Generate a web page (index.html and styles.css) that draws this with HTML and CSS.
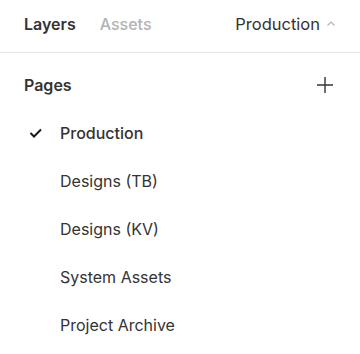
FILE: index.html
```html
<!DOCTYPE html>
<html lang="en">
<head>
  <meta charset="UTF-8">
  <meta name="viewport" content="width=device-width, initial-scale=1.0">
  <title>Layers</title>
  <link rel="stylesheet" href="styles.css">
</head>
<body>

<div class="panel">
  <div class="tabs">
    <span class="tab active">Layers</span>
    <span class="tab">Assets</span>
    <span class="page-switch">
      Production
      <svg class="chev" width="10" height="10" viewBox="0 0 10 10"><path d="M1.5 6.5 L5 3 L8.5 6.5" fill="none" stroke="#b3b3b3" stroke-width="1.2"/></svg>
    </span>
  </div>

  <div class="section-head">
    <span class="section-title">Pages</span>
    <svg class="plus" width="18" height="18" viewBox="0 0 18 18"><path d="M9 1 V17 M1 9 H17" stroke="#333" stroke-width="1.4"/></svg>
  </div>

  <!-- page list -->
  <ul class="pages">
    <li class="page current">
      <svg class="check" width="14" height="14" viewBox="0 0 14 14"><path d="M1.5 7 L5 10.5 L12 3.5" fill="none" stroke="#1a1a1a" stroke-width="2"/></svg>
      Production
    </li>
    <li class="page">Designs (TB)</li>
    <li class="page">Designs (KV)</li>
    <li class="page">System Assets</li>
    <li class="page">Project Archive</li>
  </ul>
</div>

</body>
</html>
```

FILE: styles.css
```css
body {
  margin: 0;
  background: #fff;
  font-family: Inter, "Noto Sans", sans-serif;
  color: #333;
}

.panel {
  width: 360px;
}

.tabs {
  display: flex;
  align-items: center;
  height: 47px;
  padding: 0 24px 5px 24px;
  border-bottom: 1px solid #e6e6e6;
  font-size: 16px;
}

.tab {
  color: #b3b3b3;
  font-weight: 500;
  margin-right: 24px;
}

.tab.active {
  color: #333;
  font-weight: 600;
}

.page-switch {
  margin-left: auto;
  display: flex;
  align-items: center;
  gap: 6px;
  color: #333;
  font-size: 16.5px;
}

.section-head {
  display: flex;
  align-items: center;
  justify-content: space-between;
  height: 48px;
  margin-top: 8px;
  padding: 0 26px 0 24px;
}

.section-title {
  font-size: 16px;
  font-weight: 600;
}

.pages {
  list-style: none;
  margin: 0;
  padding: 0;
}

.page {
  position: relative;
  height: 48px;
  line-height: 48px;
  padding-left: 60px;
  font-size: 16px;
  font-weight: 400;
}

.page.current {
  font-weight: 500;
}

.check {
  position: absolute;
  left: 29px;
  top: 17px;
}
```
